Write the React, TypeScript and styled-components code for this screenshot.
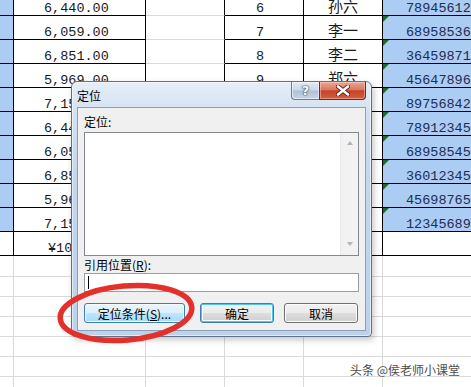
import styled, { createGlobalStyle, css } from 'styled-components';

const GlobalStyle = createGlobalStyle`
  html, body {
    margin: 0;
    padding: 0;
    background: #fff;
  }
  body {
    font-family: "Liberation Sans", Arial, sans-serif;
    overflow: hidden;
  }
`;

const COLS = [14, 132, 79, 79, 79, 100];

interface SheetRow {
  amount: string;
  num: string;
  name: string;
  phone: string;
}

const rows: SheetRow[] = [
  { amount: '6,440.00', num: '6', name: '孙六', phone: '78945612' },
  { amount: '6,059.00', num: '7', name: '李一', phone: '68958536' },
  { amount: '6,851.00', num: '8', name: '李二', phone: '36459871' },
  { amount: '5,969.00', num: '9', name: '郑六', phone: '45647896' },
  { amount: '7,158.00', num: '10', name: '王五', phone: '89756842' },
  { amount: '6,446.00', num: '11', name: '张三', phone: '78912345' },
  { amount: '6,052.00', num: '12', name: '赵四', phone: '68958545' },
  { amount: '6,857.00', num: '13', name: '钱七', phone: '36012345' },
  { amount: '5,963.00', num: '14', name: '周八', phone: '45698765' },
  { amount: '7,154.00', num: '15', name: '吴九', phone: '12345689' },
];

const emptyRows = [21, 20, 20, 20, 20, 20, 20];

const App = () => {
  return (
    <>
      <GlobalStyle />
      <Sheet>
        <Grid>
          {rows.map((r) => (
            <Row key={r.phone} $h={24}>
              <Cell $w={COLS[0]} $blue />
              <Cell $w={COLS[1]} $pl={30}>
                <Digits>{r.amount}</Digits>
              </Cell>
              <Cell $w={COLS[2]} $soft />
              <Cell $w={COLS[3]} $pl={31}>
                <Digits>{r.num}</Digits>
              </Cell>
              <Cell $w={COLS[4]} $center>
                <Name>{r.name}</Name>
              </Cell>
              <Cell $w={COLS[5]} $blue $flag $pl={23}>
                <Digits $navy>{r.phone}</Digits>
              </Cell>
            </Row>
          ))}
          <Row $h={24}>
            <Cell $w={COLS[0]} />
            <Cell $w={COLS[1]} $pl={34}>
              <Digits>¥106,317.00</Digits>
            </Cell>
            <Cell $w={COLS[2]} />
            <Cell $w={COLS[3]} />
            <Cell $w={COLS[4]} />
            <Cell $w={COLS[5]} />
          </Row>
          {emptyRows.map((h, i) => (
            <Row key={i} $h={h}>
              {COLS.map((w, j) => (
                <Cell key={j} $w={w} $grid />
              ))}
            </Row>
          ))}
        </Grid>

        <Dialog>
          <TitleBar>
            <Title>定位</Title>
            <Caption>
              <HelpButton>?</HelpButton>
              <CloseButton>
                <svg width="14" height="11" viewBox="0 0 14 11">
                  <path
                    d="M2 1.5 L12 9.5 M12 1.5 L2 9.5"
                    stroke="#5b1a10"
                    strokeWidth="4.2"
                    strokeLinecap="round"
                  />
                  <path
                    d="M2 1.5 L12 9.5 M12 1.5 L2 9.5"
                    stroke="#fff"
                    strokeWidth="2.6"
                    strokeLinecap="round"
                  />
                </svg>
              </CloseButton>
            </Caption>
          </TitleBar>
          <Client>
            <Label $h={20}>定位:</Label>
            <ListBox>
              <ScrollBar>
                <Arrow $up />
                <Arrow />
              </ScrollBar>
            </ListBox>
            <Label $h={17}>
              引用位置(<u>R</u>):
            </Label>
            <TextInput>
              <Caret />
            </TextInput>
            <ButtonRow>
              <PushButton $w={101} $variant="hover">
                定位条件(<u>S</u>)...
              </PushButton>
              <PushButton $w={74} $variant="default" style={{ marginLeft: 15 }}>
                确定
              </PushButton>
              <PushButton $w={74} $variant="normal" style={{ marginLeft: 10 }}>
                取消
              </PushButton>
            </ButtonRow>
          </Client>
        </Dialog>

        <Circle width="152" height="74" viewBox="0 0 152 74">
          <ellipse
            cx="76"
            cy="37"
            rx="66"
            ry="27"
            fill="none"
            stroke="#e4302b"
            strokeWidth="5.5"
            transform="rotate(-5 76 37)"
          />
        </Circle>

        <Watermark>头条 @侯老师小课堂</Watermark>
      </Sheet>
    </>
  );
};

export default App;

const Sheet = styled.div`
  position: relative;
  width: 471px;
  height: 387px;
  overflow: hidden;
  background: #fff;
`;

const Grid = styled.div`
  margin-top: -8px;
  display: flex;
  flex-direction: column;
`;

const Row = styled.div<{ $h: number }>`
  display: flex;
  flex: 0 0 ${(p) => p.$h}px;
  height: ${(p) => p.$h}px;
`;

const Cell = styled.div<{
  $w: number;
  $blue?: boolean;
  $soft?: boolean;
  $grid?: boolean;
  $pl?: number;
  $center?: boolean;
  $flag?: boolean;
}>`
  position: relative;
  flex: 0 0 ${(p) => p.$w}px;
  box-sizing: border-box;
  height: 100%;
  border-right: 1px solid ${(p) => (p.$grid ? '#d9d9d9' : '#000')};
  border-bottom: 1px solid ${(p) => (p.$grid || p.$soft ? '#d9d9d9' : '#000')};
  background: ${(p) => (p.$blue ? '#abcdf3' : '#fff')};
  display: flex;
  align-items: flex-end;
  justify-content: ${(p) => (p.$center ? 'center' : 'flex-start')};
  padding-left: ${(p) => p.$pl ?? 0}px;
  overflow: hidden;
  white-space: nowrap;

  ${(p) =>
    p.$flag &&
    css`
      &::before {
        content: '';
        position: absolute;
        left: 0;
        top: 0;
        border-top: 6px solid #1d6b2c;
        border-right: 6px solid transparent;
      }
    `}
`;

const Digits = styled.span<{ $navy?: boolean }>`
  font-family: "Liberation Mono", "Courier New", monospace;
  font-size: 13.5px;
  line-height: 12px;
  color: ${(p) => (p.$navy ? '#1e2c52' : '#1a1a1a')};
`;

const Name = styled.span`
  font-family: "Noto Sans CJK SC", sans-serif;
  font-size: 15px;
  line-height: 15px;
  padding-bottom: 2px;
  color: #1a1a1a;
`;

const Dialog = styled.div`
  position: absolute;
  left: 71px;
  top: 81px;
  width: 301px;
  height: 256px;
  box-sizing: border-box;
  border: 1px solid #5f718a;
  border-radius: 6px 6px 4px 4px;
  background: linear-gradient(180deg, #e6eef8 0%, #d3e1f1 12%, #c2d6ec 40%, #bcd2ea 100%);
  box-shadow: inset 0 0 0 1px rgba(255, 255, 255, 0.55), 2px 3px 6px rgba(0, 0, 0, 0.22);
  display: flex;
  flex-direction: column;
`;

const TitleBar = styled.div`
  height: 25px;
  flex: 0 0 25px;
  display: flex;
  align-items: flex-start;
  justify-content: space-between;
  padding: 0 5px;
`;

const Title = styled.div`
  padding-top: 7px;
  font-family: "Noto Sans CJK SC", sans-serif;
  font-size: 12px;
  line-height: 14px;
  color: #000;
`;

const Caption = styled.div`
  display: flex;
  height: 18px;
`;

const HelpButton = styled.div`
  width: 28px;
  height: 18px;
  box-sizing: border-box;
  border: 1px solid #6c7e96;
  border-top: none;
  border-right: none;
  border-radius: 0 0 0 4px;
  background: linear-gradient(180deg, #e3ebf4 0%, #c9d7e7 48%, #aebfd6 52%, #c6d6e9 100%);
  box-shadow: inset 0 0 0 1px rgba(255, 255, 255, 0.5);
  display: flex;
  align-items: center;
  justify-content: center;
  font-family: "DejaVu Sans", sans-serif;
  font-weight: bold;
  font-size: 13px;
  color: #fff;
  text-shadow: 0 0 1px #3b4b63, 0 0 1px #3b4b63, 0 0 2px #3b4b63;
`;

const CloseButton = styled.div`
  width: 47px;
  height: 18px;
  box-sizing: border-box;
  border: 1px solid #6e2a1e;
  border-top: none;
  border-radius: 0 0 4px 0;
  background: linear-gradient(180deg, #eaa898 0%, #d9785f 45%, #c4432a 52%, #d65d3d 100%);
  box-shadow: inset 0 0 0 1px rgba(255, 220, 210, 0.45);
  display: flex;
  align-items: center;
  justify-content: center;
`;

const Client = styled.div`
  flex: 1;
  margin: 0 5px 5px;
  background: #f0f0f0;
  border: 1px solid #8c9fb6;
  padding: 4px 6px 7px;
  display: flex;
  flex-direction: column;
`;

const Label = styled.div<{ $h: number }>`
  height: ${(p) => p.$h}px;
  flex: 0 0 ${(p) => p.$h}px;
  font-family: "Noto Sans CJK SC", sans-serif;
  font-size: 12px;
  line-height: ${(p) => p.$h}px;
  color: #000;

  u {
    text-decoration: underline;
  }
`;

const ListBox = styled.div`
  height: 124px;
  flex: 0 0 124px;
  box-sizing: border-box;
  border: 1px solid #828790;
  background: #fff;
  display: flex;
  justify-content: flex-end;
`;

const ScrollBar = styled.div`
  width: 17px;
  background: #f2f2f2;
  border-left: 1px solid #e8e8e8;
  display: flex;
  flex-direction: column;
  justify-content: space-between;
  align-items: center;
  padding: 8px 0 9px;
`;

const Arrow = styled.div<{ $up?: boolean }>`
  width: 0;
  height: 0;
  border-left: 3.5px solid transparent;
  border-right: 3.5px solid transparent;
  ${(p) =>
    p.$up
      ? css`
          border-bottom: 4px solid #b4b4b4;
        `
      : css`
          border-top: 4px solid #b4b4b4;
        `}
`;

const TextInput = styled.div`
  height: 19px;
  flex: 0 0 19px;
  box-sizing: border-box;
  border: 1px solid #9a9da3;
  background: #fff;
  display: flex;
  align-items: center;
  padding-left: 3px;
`;

const Caret = styled.div`
  width: 1px;
  height: 13px;
  background: #000;
`;

const ButtonRow = styled.div`
  display: flex;
  margin-top: 11px;
`;

const variants = {
  normal: css`
    border-color: #707070;
    background: linear-gradient(180deg, #f2f2f2 0%, #ebebeb 48%, #dddddd 52%, #cfcfcf 100%);
    box-shadow: inset 0 0 0 1px #fbfbfb;
  `,
  hover: css`
    border-color: #3c7fb1;
    background: linear-gradient(180deg, #eaf6fd 0%, #d9f0fc 48%, #bee6fd 52%, #a7d9f5 100%);
    box-shadow: inset 0 0 0 1px #f4fbff;
  `,
  default: css`
    border-color: #3c7fb1;
    background: linear-gradient(180deg, #f2f2f2 0%, #ebebeb 48%, #dddddd 52%, #cfcfcf 100%);
    box-shadow: inset 0 0 0 1px #48c8f0, inset 0 0 0 2px #f4fbff;
  `,
};

const PushButton = styled.div<{ $w: number; $variant: keyof typeof variants }>`
  width: ${(p) => p.$w}px;
  height: 20px;
  box-sizing: border-box;
  border: 1px solid;
  border-radius: 3px;
  display: flex;
  align-items: center;
  justify-content: center;
  font-family: "Noto Sans CJK SC", sans-serif;
  font-size: 12px;
  color: #000;
  ${(p) => variants[p.$variant]}
`;

const Circle = styled.svg`
  position: absolute;
  left: 50px;
  top: 276px;
  pointer-events: none;
`;

const Watermark = styled.div`
  position: absolute;
  right: 11px;
  bottom: 10px;
  font-family: "Noto Sans CJK SC", sans-serif;
  font-size: 12px;
  line-height: 14px;
  color: #4d4d4d;
  text-shadow: 0 0 2px #fff, 0 0 2px #fff;
  white-space: nowrap;
`;
